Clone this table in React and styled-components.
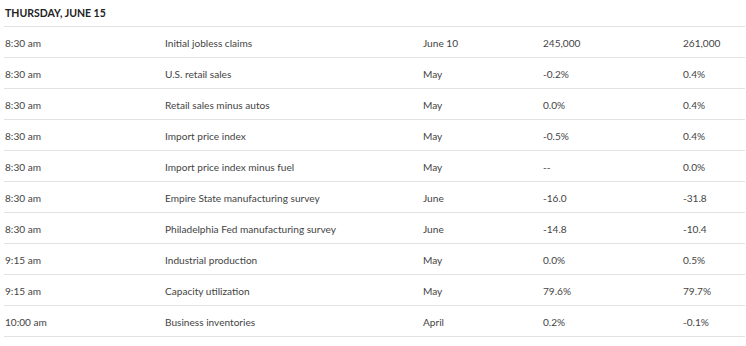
import styled, { createGlobalStyle } from "styled-components"

const Global = createGlobalStyle`
  body {
    margin: 0;
    background: #fff;
    font-family: Lato, "Open Sans", sans-serif;
  }
`

const Wrap = styled.div`
  width: 741px;
  padding-left: 4px;
`
const Day = styled.div`
  height: 27px;
  display: flex;
  align-items: center;
  padding-left: 1px;
  padding-bottom: 1px;
  box-sizing: border-box;
  font-size: 10.5px;
  font-weight: 700;
  color: #222;
  border-bottom: 1px solid #e2e2e2;
`
const Row = styled.div`
  display: grid;
  grid-template-columns: 160px 258px 120px 140px 1fr;
  align-items: center;
  height: 29px;
  padding-left: 1px;
  padding-top: 1px;
  border-bottom: 1px solid #e2e2e2;
  font-size: 10.1px;
  color: #444;
`
const Cell = styled.div`
  white-space: nowrap;
`

const rows = [
  ["8:30 am", "Initial jobless claims", "June 10", "245,000", "261,000"],
  ["8:30 am", "U.S. retail sales", "May", "-0.2%", "0.4%"],
  ["8:30 am", "Retail sales minus autos", "May", "0.0%", "0.4%"],
  ["8:30 am", "Import price index", "May", "-0.5%", "0.4%"],
  ["8:30 am", "Import price index minus fuel", "May", "--", "0.0%"],
  ["8:30 am", "Empire State manufacturing survey", "June", "-16.0", "-31.8"],
  ["8:30 am", "Philadelphia Fed manufacturing survey", "June", "-14.8", "-10.4"],
  ["9:15 am", "Industrial production", "May", "0.0%", "0.5%"],
  ["9:15 am", "Capacity utilization", "May", "79.6%", "79.7%"],
  ["10:00 am", "Business inventories", "April", "0.2%", "-0.1%"],
]

const App = () => {
  return (
    <>
      <Global />
      <Wrap>
        <Day>THURSDAY, JUNE 15</Day>
        {rows.map((r, i) => (
          <Row key={i}>
            {r.map((c, j) => (
              <Cell key={j}>{c}</Cell>
            ))}
          </Row>
        ))}
      </Wrap>
    </>
  )
}

export default App
